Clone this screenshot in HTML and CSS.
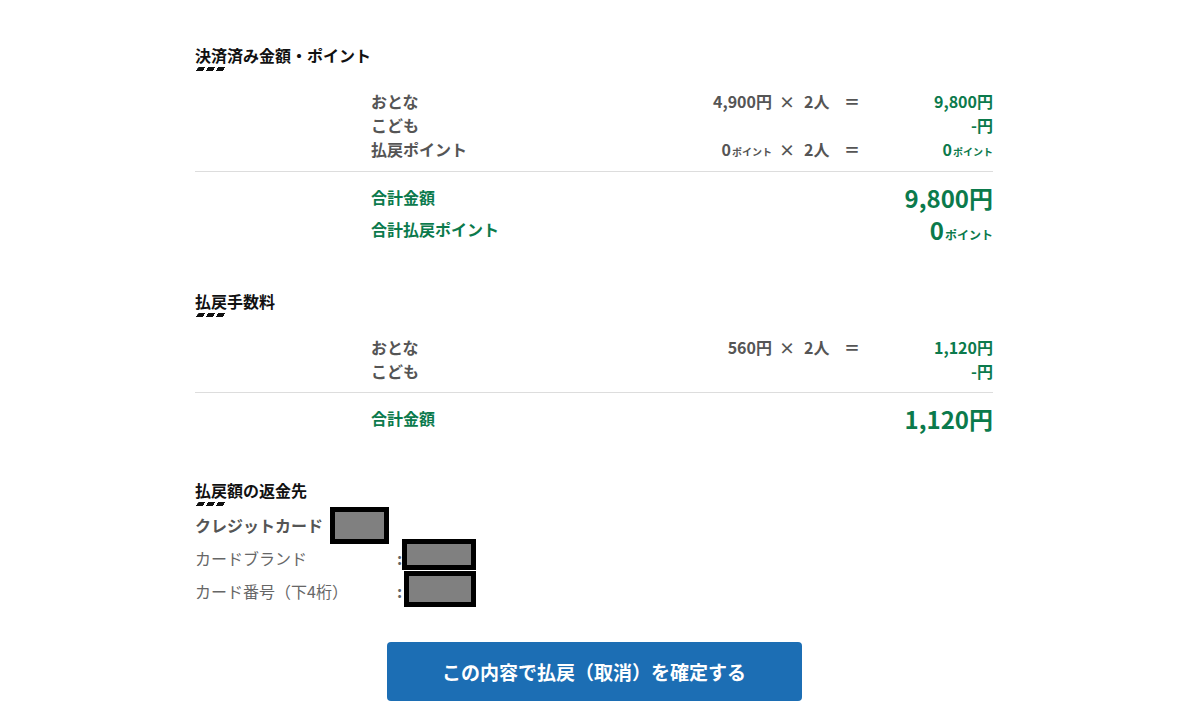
FILE: index.html
```html
<!DOCTYPE html>
<html lang="ja">
<head>
    <meta charset="UTF-8">
    <meta name="viewport" content="width=device-width, initial-scale=1.0">
    <title>払戻確認</title>
    <link rel="stylesheet" href="styles.css">
</head>
<body>
    <div class="page">
        <section class="block">
            <h2 class="heading">決済済み金額・ポイント</h2>
            <div class="detail">
                <div class="row">
                    <span class="label">おとな</span>
                    <span class="price">4,900円</span>
                    <span class="op">×</span>
                    <span class="qty">2人</span>
                    <span class="op">＝</span>
                    <span class="sum">9,800円</span>
                </div>
                <div class="row">
                    <span class="label">こども</span>
                    <span class="price"></span>
                    <span class="op"></span>
                    <span class="qty"></span>
                    <span class="op"></span>
                    <span class="sum">-円</span>
                </div>
                <div class="row">
                    <span class="label">払戻ポイント</span>
                    <span class="price">0<small>ポイント</small></span>
                    <span class="op">×</span>
                    <span class="qty">2人</span>
                    <span class="op">＝</span>
                    <span class="sum">0<small>ポイント</small></span>
                </div>
            </div>
            <div class="totals">
                <div class="total-row">
                    <span>合計金額</span>
                    <span class="big">9,800円</span>
                </div>
                <div class="total-row">
                    <span>合計払戻ポイント</span>
                    <span class="big">0<small>ポイント</small></span>
                </div>
            </div>
        </section>

        <section class="block fees">
            <h2 class="heading">払戻手数料</h2>
            <div class="detail">
                <div class="row">
                    <span class="label">おとな</span>
                    <span class="price">560円</span>
                    <span class="op">×</span>
                    <span class="qty">2人</span>
                    <span class="op">＝</span>
                    <span class="sum">1,120円</span>
                </div>
                <div class="row">
                    <span class="label">こども</span>
                    <span class="price"></span>
                    <span class="op"></span>
                    <span class="qty"></span>
                    <span class="op"></span>
                    <span class="sum">-円</span>
                </div>
            </div>
            <div class="totals">
                <div class="total-row">
                    <span>合計金額</span>
                    <span class="big">1,120円</span>
                </div>
            </div>
        </section>

        <section class="block refund">
            <h2 class="heading">払戻額の返金先</h2>
            <div class="card-title">
                クレジットカード
                <span class="mask mask-title"></span>
            </div>
            <div class="info-row">
                <span class="info-label">カードブランド</span>
                <span class="colon">:</span>
                <span class="mask mask-brand"></span>
            </div>
            <div class="info-row">
                <span class="info-label">カード番号（下4桁）</span>
                <span class="colon">:</span>
                <span class="mask mask-number"></span>
            </div>
        </section>

        <div class="actions">
            <button type="button" class="confirm">この内容で払戻（取消）を確定する</button>
        </div>
    </div>
</body>
</html>
```

FILE: styles.css
```css
body {
    margin: 0;
    padding: 0;
    background: #fff;
    font-family: "Noto Sans CJK JP", "Noto Sans", sans-serif;
    color: #555;
}

.page {
    width: 798px;
    margin-left: 195px;
    padding-top: 43px;
}

.block {
    margin-bottom: 44px;
}

.heading {
    position: relative;
    margin: 0;
    font-size: 16px;
    line-height: 24px;
    font-weight: bold;
    color: #111;
}

/* three little slanted dashes under the title */
.heading::after {
    content: '';
    display: block;
    width: 28px;
    height: 4px;
    margin-left: 2px;
    background: repeating-linear-gradient(90deg, #111 0 7px, transparent 7px 10px);
    transform: skewX(-40deg);
}

.detail {
    padding: 18px 0 7px 176px;
    border-bottom: 1px solid #ddd;
}

.fees .detail {
    padding-bottom: 9px;
}

.row {
    display: grid;
    grid-template-columns: 1fr 130px 30px 30px 40px 121px;
    font-size: 16px;
    line-height: 24px;
    font-weight: bold;
}

.price {
    text-align: right;
}

.op {
    text-align: center;
}

.qty {
    padding-left: 2px;
}

.sum {
    text-align: right;
    color: #0b7a4c;
}

small {
    font-size: 10px;
    margin-left: 1px;
}

.totals {
    padding: 9px 0 0 176px;
}

.total-row {
    display: flex;
    justify-content: space-between;
    align-items: center;
    height: 32px;
    font-size: 16px;
    font-weight: bold;
    color: #0b7a4c;
}

.big {
    font-size: 24px;
}

.big small {
    font-size: 12px;
}

.refund {
    margin-bottom: 35px;
}

.refund .heading::after {
    margin-bottom: 3px;
}

.card-title {
    display: flex;
    align-items: center;
    height: 32px;
    font-size: 16px;
    font-weight: bold;
}

.info-row {
    display: flex;
    align-items: center;
    height: 33px;
    font-size: 16px;
    color: #666;
}

.info-label {
    width: 202px;
}

.colon {
    width: 5px;
    font-weight: bold;
}

.mask {
    display: inline-block;
    box-sizing: border-box;
    background: #808080;
    border: 5px solid #000;
}

.mask-title {
    width: 59px;
    height: 37px;
    margin-left: 7px;
}

.mask-brand {
    width: 74px;
    height: 31px;
    margin-top: -6px;
}

.mask-number {
    width: 72px;
    height: 36px;
    margin-left: 2px;
    margin-top: -4px;
}

.actions {
    display: flex;
    justify-content: center;
}

.confirm {
    width: 415px;
    height: 59px;
    border: none;
    border-radius: 4px;
    background: #1c6eb4;
    color: #fff;
    font-family: inherit;
    font-size: 19px;
    font-weight: bold;
    cursor: pointer;
}
```
